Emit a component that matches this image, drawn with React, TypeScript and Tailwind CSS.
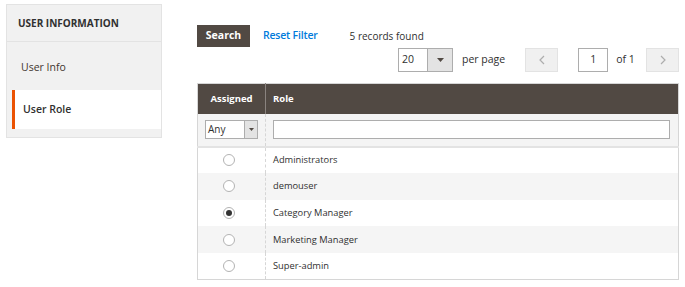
import React, { useState } from 'react';

const roles = ['Administrators', 'demouser', 'Category Manager', 'Marketing Manager', 'Super-admin'];

const Caret = () => (
  <svg width="7" height="4" viewBox="0 0 7 4">
    <path d="M0 0h7L3.5 4z" fill="#514943" />
  </svg>
);

const Radio: React.FC<{ checked: boolean }> = ({ checked }) => (
  <span className="w-[12px] h-[12px] rounded-full border border-[#b3b3b3] bg-white flex items-center justify-center">
    {checked && <span className="w-[6px] h-[6px] rounded-full bg-[#333]" />}
  </span>
);

export default function App() {
  const [selected, setSelected] = useState(2);

  return (
    <div className="w-[685px] h-[287px] bg-white flex text-[#303030] text-[10px] font-['Open_Sans',sans-serif] overflow-hidden whitespace-nowrap">
      {/* Sidebar tabs */}
      <div className="w-[156px] shrink-0 ml-[6px] mt-[4px] self-start bg-[#f1f1f1] border border-[#e3e3e3] pb-[8px]">
        <div className="h-[37px] flex items-center pl-[11px] font-bold text-[10px] text-[#303030] border-b border-[#e3e3e3]">
          USER INFORMATION
        </div>
        <div className="h-[48px] flex items-center pl-[14px] pt-[4px] text-[10.5px] text-[#41362f]">User Info</div>
        <div className="h-[39px] ml-[5px] flex items-center pl-[8px] bg-white border-l-[3px] border-[#eb5202] font-semibold text-[10.5px] text-[#303030]">
          User Role
        </div>
      </div>

      {/* Grid */}
      <div className="ml-[35px] w-[482px] shrink-0 flex flex-col">
        <div className="flex items-center mt-[25px] h-[22px]">
          <button className="h-[22px] w-[53px] bg-[#514943] text-white font-bold text-[10.5px]">Search</button>
          <span className="ml-[13px] text-[#007bdb] font-semibold text-[10.5px] tracking-[-0.2px]">Reset Filter</span>
          <span className="ml-[32px] text-[10px] text-[#303030]">5 records found</span>
        </div>

        <div className="flex items-center h-[24px] mt-[1px] pl-[201px]">
          <div className="flex h-[24px] w-[55px] border border-[#adadad] bg-white">
            <span className="flex-1 pl-[3px] flex items-center text-[10.5px]">20</span>
            <span className="w-[25px] bg-[#e3e3e3] border-l border-[#adadad] flex items-center justify-center">
              <Caret />
            </span>
          </div>
          <span className="ml-[9px] text-[10.5px]">per page</span>
          <div className="ml-[20px] h-[24px] w-[33px] bg-[#f0f0f0] border border-[#e3e3e3] flex items-center justify-center">
            <svg width="6" height="10" viewBox="0 0 6 10"><path d="M5 1L1 5l4 4" stroke="#adadad" strokeWidth="1.2" fill="none" /></svg>
          </div>
          <div className="ml-[20px] h-[24px] w-[30px] border border-[#adadad] bg-white flex items-center justify-center text-[10.5px]">1</div>
          <span className="ml-[8px] text-[10.5px]">of 1</span>
          <div className="ml-auto h-[24px] w-[33px] bg-[#f0f0f0] border border-[#e3e3e3] flex items-center justify-center">
            <svg width="6" height="10" viewBox="0 0 6 10"><path d="M1 1l4 4-4 4" stroke="#adadad" strokeWidth="1.2" fill="none" /></svg>
          </div>
        </div>

        <table className="mt-[11px] w-full border-collapse border border-[#d6d6d6]">
          <thead>
            <tr className="bg-[#514943] text-white h-[30px]">
              <th className="w-[68px] font-bold text-[9.5px] text-center border-r border-[#8a837f]">Assigned</th>
              <th className="font-bold text-[9.5px] text-left pl-[7px]">Role</th>
            </tr>
            <tr className="bg-[#f4f4f4] h-[33px] border-b-2 border-[#e3e3e3]">
              <td className="px-[7px] border-r border-dashed border-[#d6d6d6]">
                <div className="flex h-[19px] w-[53px] border border-[#adadad] bg-white">
                  <span className="flex-1 pl-[2px] flex items-center text-[10px]">Any</span>
                  <span className="w-[13px] bg-[#e3e3e3] border-l border-[#adadad] flex items-center justify-center">
                    <svg width="5" height="3" viewBox="0 0 5 3"><path d="M0 0h5L2.5 3z" fill="#514943" /></svg>
                  </span>
                </div>
              </td>
              <td className="pl-[7px] pr-[8px]">
                <div className="h-[19px] w-full border border-[#adadad] bg-white" />
              </td>
            </tr>
          </thead>
          <tbody>
            {roles.map((r, i) => (
              <tr
                key={r}
                onClick={() => setSelected(i)}
                className={`h-[26.6px] ${i % 2 === 1 ? 'bg-[#f5f5f5]' : 'bg-white'}`}
              >
                <td className="border-r border-dashed border-[#d6d6d6]">
                  <div className="flex justify-center pr-[5px]"><Radio checked={selected === i} /></div>
                </td>
                <td className="pl-[7px] text-[9.3px] text-[#303030]">{r}</td>
              </tr>
            ))}
          </tbody>
        </table>
      </div>
    </div>
  );
}
